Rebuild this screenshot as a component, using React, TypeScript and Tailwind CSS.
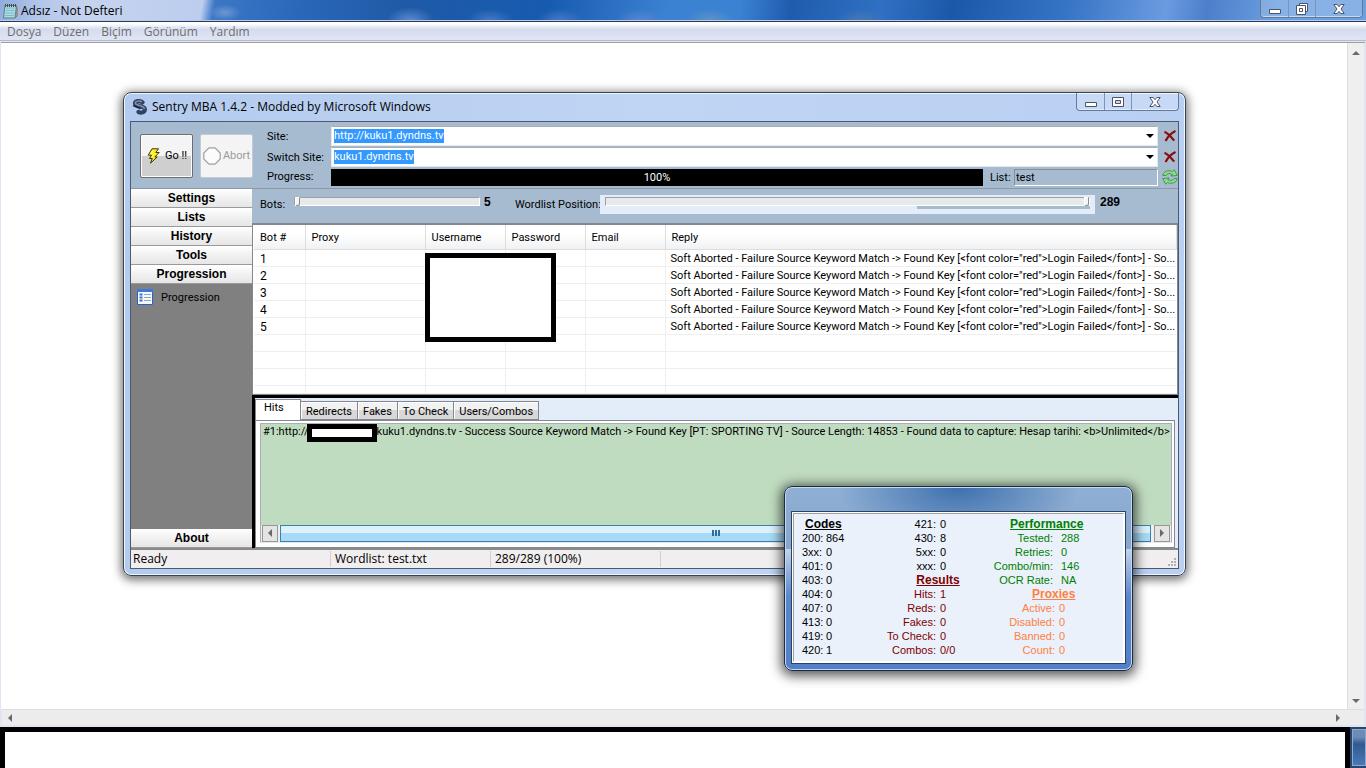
import type { ReactNode } from 'react';

const SIDE_MENU = ['Settings', 'Lists', 'History', 'Tools', 'Progression'];
const MENU_BAR = ['Dosya', 'Düzen', 'Biçim', 'Görünüm', 'Yardım'];
const COLUMNS = ['Bot #', 'Proxy', 'Username', 'Password', 'Email', 'Reply'];
const TABS = ['Redirects', 'Fakes', 'To Check', 'Users/Combos'];
const BOTS = [1, 2, 3, 4, 5];
const REPLY =
  'Soft Aborted - Failure Source Keyword Match -> Found Key [<font color="red">Login Failed</font>] - So...';

const CODES = [
  ['200:', '864'],
  ['3xx:', '0'],
  ['401:', '0'],
  ['403:', '0'],
  ['404:', '0'],
  ['407:', '0'],
  ['413:', '0'],
  ['419:', '0'],
  ['420:', '1'],
];
const MORE_CODES = [
  ['421:', '0'],
  ['430:', '8'],
  ['5xx:', '0'],
  ['xxx:', '0'],
];
const RESULTS = [
  ['Hits:', '1'],
  ['Reds:', '0'],
  ['Fakes:', '0'],
  ['To Check:', '0'],
  ['Combos:', '0/0'],
];
const PERFORMANCE = [
  ['Tested:', '288'],
  ['Retries:', '0'],
  ['Combo/min:', '146'],
  ['OCR Rate:', 'NA'],
];
const PROXIES = [
  ['Active:', '0'],
  ['Disabled:', '0'],
  ['Banned:', '0'],
  ['Count:', '0'],
];

/* ---------- icons ---------- */

const NotepadIcon = () => (
  <svg className="h-4 w-4 shrink-0" viewBox="0 0 16 16">
    <path d="M3 2.5h11.5L13 15H1.500z" fill="#a9dbe3" stroke="#5b7f8c" />
    <path d="M4 5h9M3.800 7.500h8.800M3.500 10h8.800M3.200 12.500h8.800" stroke="#7fbccb" />
    <path d="M3.500 1v3M5.500 1v3M7.500 1v3M9.500 1v3M11.500 1v3M13.500 1v3" stroke="#45494d" />
    <path d="M13 15l2-2V4" fill="none" stroke="#8b6a4a" />
  </svg>
);

const SentryIcon = () => (
  <svg className="h-4 w-4 shrink-0" viewBox="0 0 16 16" fill="none">
    <path
      d="M10.500 3.300C8 1.300 3 1.800 3 4.600c0 3.200 9.300 1.800 9.800 5.400.4 3.600-4 4.400-6.300 2.900"
      stroke="#33415e"
      strokeWidth="4.200"
      strokeLinecap="round"
    />
    <path
      d="M9.500 2.500C7 1.300 3.300 2.200 3.300 4.100c0 2.600 8.300 2.200 9 5.400"
      stroke="#8293b0"
      strokeWidth="1.500"
      strokeLinecap="round"
    />
    <path d="M1 6.500c2 1.500 5 1.500 7.500 3.300" stroke="#18223a" strokeWidth="1.500" />
  </svg>
);

const BoltIcon = () => (
  <svg className="h-4 w-4 shrink-0" viewBox="0 0 16 16">
    <path
      d="M6 .8h6.500L9.800 4.500h3.400L8.800 9h2.400L4.500 15.200l1.800-4.700H3.500l2-3.300H2.200z"
      fill="#ffee1e"
      stroke="#3a3608"
      strokeWidth="1"
    />
    <path d="M7 2.500L4.800 6M8.500 5L6 9" stroke="#fffbb0" />
  </svg>
);

const AbortIcon = () => (
  <svg className="h-[18px] w-[18px] shrink-0" viewBox="0 0 18 18">
    <path
      d="M6 .8h6L17.200 6v6L12 17.200H6L.8 12V6z"
      fill="#fbfbfb"
      stroke="#a0a0a0"
      strokeWidth="1.200"
    />
  </svg>
);

const DeleteIcon = () => (
  <svg className="h-3 w-3" viewBox="0 0 12 12" fill="none">
    <path d="M.5 1.800c3.200 1.300 6.500 5 9.700 8.800" stroke="#8a0c0c" strokeWidth="2.200" />
    <path d="M11.500 1C8 2.500 4 6.500 1.500 11" stroke="#8a0c0c" strokeWidth="2.200" />
  </svg>
);

const RefreshIcon = () => (
  <svg className="h-4 w-4" viewBox="0 0 16 16" stroke="#2f8b36" strokeWidth=".8" fill="#8fdc86">
    <path d="M.8 6.500C1.500 2.300 6 .6 10.500 2.500L12.300.8 15.300 6.500 9 7l1.300-1.600C7.500 4 5 4.400 4 6.500z" />
    <path d="M15.200 9.500c-.7 4.200-5.200 5.900-9.700 4l-1.800 1.700L.7 9.500 7 9l-1.300 1.600c2.800 1.400 5.300 1 6.300-1.100z" />
  </svg>
);

const ListIcon = () => (
  <svg className="h-4 w-4 shrink-0" viewBox="0 0 16 16">
    <path d="M.5.5h15v15H.5z" fill="#f4f8ff" stroke="#2d62c4" />
    <path d="M0 1.500h16" stroke="#3f78dc" strokeWidth="3" />
    <path d="M2.500 5.500h3M2.500 8.500h3M2.500 11.500h3" stroke="#3f6fc8" strokeWidth="2" />
    <path d="M7 5.500h7M7 8.500h7M7 11.500h7" stroke="#8ea6cc" />
  </svg>
);

const Arrow = ({ d }: { d: string }) => (
  <svg className="h-2 w-2" viewBox="0 0 8 8" fill="#6a6a6a">
    <path d={d} />
  </svg>
);

const UP = 'M0 6l4-4 4 4z';
const DOWN = 'M0 2l4 4 4-4z';
const LEFT = 'M6 0L2 4l4 4z';
const RIGHT = 'M2 0l4 4-4 4z';

const MinGlyph = () => (
  <svg className="h-3 w-3" viewBox="0 0 12 12">
    <path d="M.5 6.500h11v4H.5z" fill="#fff" stroke="#4b5468" />
  </svg>
);

const MaxGlyph = () => (
  <svg className="h-3 w-3" viewBox="0 0 12 12" fillRule="evenodd">
    <path d="M.5 1.500h11v9H.5zM3.500 4.500v3h5v-3z" fill="#fff" stroke="#4b5468" />
  </svg>
);

const RestoreGlyph = () => (
  <svg className="h-3 w-3" viewBox="0 0 12 12" fillRule="evenodd">
    <path d="M3.500.5h8v8h-8z" fill="#fff" stroke="#4b5468" />
    <path d="M.5 2.500h9v9h-9zM3.500 5.500v3h3v-3z" fill="#fff" stroke="#4b5468" />
  </svg>
);

const CloseGlyph = () => (
  <svg className="h-3 w-3" viewBox="0 0 12 12">
    <path
      d="M.8 1.500h3.400L6 3.700l1.800-2.200h3.400L8 6l3.200 4.500H7.800L6 8.300l-1.800 2.200H.8L4 6z"
      fill="#fff"
      stroke="#4b5468"
    />
  </svg>
);

/* ---------- small parts ---------- */

const WindowButtons = ({ restore }: { restore?: boolean }) => (
  <div className="flex h-[18px] shrink-0 divide-x divide-[#7f93b5] rounded-b border border-t-0 border-[#6478a0] bg-white/20 shadow-[inset_0_-1px_0_rgba(255,255,255,0.5)]">
    <button aria-label="Minimize" className="flex w-7 items-center justify-center">
      <MinGlyph />
    </button>
    <button aria-label="Maximize" className="flex w-[27px] items-center justify-center">
      {restore ? <RestoreGlyph /> : <MaxGlyph />}
    </button>
    <button aria-label="Close" className="flex w-[46px] items-center justify-center">
      <CloseGlyph />
    </button>
  </div>
);

const ComboRow = ({ id, label, value }: { id: string; label: string; value: string }) => (
  <div className="flex h-5 items-center">
    <label htmlFor={id} className="w-16 shrink-0 pt-0.5">
      {label}
    </label>
    <div className="flex h-full flex-1 items-center border border-[#e3e9ef] border-t-[#abadb3] bg-white pl-0.5">
      <input
        id={id}
        defaultValue={value}
        className="field-sizing-content h-[14px] bg-[#3399ff] text-white outline-none"
      />
      <button aria-label={`${label} history`} className="ml-auto px-[3px]">
        <svg className="h-2 w-2" viewBox="0 0 8 8">
          <path d="M0 2l4 4 4-4z" />
        </svg>
      </button>
    </div>
    <button aria-label={`Clear ${label}`} className="flex w-5 shrink-0 justify-end pr-0.5">
      <DeleteIcon />
    </button>
  </div>
);

const SideButton = ({ children }: { children: ReactNode }) => (
  <button className="h-[19px] w-full border-b border-[#9a9a9a] bg-linear-to-b from-white via-[#f1f1f1] via-50% to-[#e6e6e6] text-center font-['Liberation_Sans',Arial,sans-serif] text-[12px] leading-[18px] font-bold">
    {children}
  </button>
);

const SliderThumb =
  '[&::-webkit-slider-thumb]:h-[9px] [&::-webkit-slider-thumb]:w-[5px] [&::-webkit-slider-thumb]:appearance-none [&::-webkit-slider-thumb]:rounded-b-sm [&::-webkit-slider-thumb]:border [&::-webkit-slider-thumb]:border-t-white [&::-webkit-slider-thumb]:border-l-white [&::-webkit-slider-thumb]:border-[#8a8a8a] [&::-webkit-slider-thumb]:bg-[#f4f4f4]';

const StatRows = ({ rows, gap }: { rows: string[][]; gap: string }) => (
  <>
    {rows.map(([label, value]) => (
      <div key={label} className={`grid grid-cols-2 ${gap}`}>
        <dt className="flex justify-end whitespace-nowrap">{label}</dt>
        <dd>{value}</dd>
      </div>
    ))}
  </>
);

/* ---------- windows ---------- */

const Toolbar = () => (
  <div className="flex border-b border-[#8c9aa8] bg-[#a6bbd0] pt-1 pb-0.5">
    <div className="flex items-start gap-[7px] pt-2 pl-[9px]">
      <button className="flex h-11 w-[53px] items-center justify-center gap-[3px] rounded-xs border border-[#6f6f6f] bg-linear-to-b from-[#f4f4f4] from-50% to-[#cfcfcf] to-50% shadow-[inset_0_0_0_1px_#fbfbfb]">
        <BoltIcon />
        Go !!
      </button>
      <button
        disabled
        className="flex h-11 w-[53px] items-center justify-center gap-0.5 rounded-xs border border-[#c3cad1] bg-[#f4f4f4] text-[#9a9a9a]"
      >
        <AbortIcon />
        Abort
      </button>
    </div>
    <div className="flex flex-1 flex-col gap-px pl-[14px]">
      <ComboRow id="site" label="Site:" value="http://kuku1.dyndns.tv" />
      <ComboRow id="switch-site" label="Switch Site:" value="kuku1.dyndns.tv" />
      <div className="flex h-[18px] items-center">
        <span className="w-16 shrink-0 pt-px">Progress:</span>
        <div
          role="progressbar"
          aria-valuenow={100}
          className="h-[17px] flex-1 bg-black text-center leading-[17px] text-white"
        >
          100%
        </div>
        <label htmlFor="list" className="w-[31px] shrink-0 pt-0.5 pl-[7px]">
          List:
        </label>
        <input
          id="list"
          defaultValue="test"
          className="h-[17px] w-[144px] border border-t-[#8a8f95] border-r-white border-b-white border-l-[#8a8f95] bg-[#a6bbd0] px-px outline-none"
        />
        <button aria-label="Refresh list" className="flex w-5 shrink-0 justify-end">
          <RefreshIcon />
        </button>
      </div>
    </div>
  </div>
);

const Sidebar = () => (
  <nav className="flex w-[121px] shrink-0 flex-col bg-[#808080]">
    {SIDE_MENU.map((item) => (
      <SideButton key={item}>{item}</SideButton>
    ))}
    <button className="flex items-center gap-2 pt-1 pl-1.5">
      <ListIcon />
      <span className="pt-0.5">Progression</span>
    </button>
    <div className="mt-auto">
      <SideButton>About</SideButton>
    </div>
  </nav>
);

const Sliders = () => (
  <div className="flex h-[34px] items-start bg-[#a6bbd0] pt-1.5 pl-2">
    <label htmlFor="bots" className="w-[34px] pt-0.5">
      Bots:
    </label>
    <input
      id="bots"
      type="range"
      min={5}
      max={100}
      defaultValue={5}
      className={`mt-0.5 h-[9px] w-[186px] appearance-none border border-t-[#a0a0a0] border-r-white border-b-white border-l-[#a0a0a0] bg-[#e7eaea] ${SliderThumb}`}
    />
    <b className="w-[35px] pl-1 font-['Liberation_Sans',Arial,sans-serif] text-[12px] leading-[14px]">
      5
    </b>
    <label htmlFor="position" className="w-[85px] shrink-0 pt-0.5 whitespace-nowrap">
      Wordlist Position:
    </label>
    <div className="flex h-[19px] flex-1 flex-col items-stretch bg-[#e3edfa] px-[5px] pt-0.5">
      <input
        id="position"
        type="range"
        max={289}
        defaultValue={289}
        className={`h-[9px] w-full appearance-none border border-t-[#a0a0a0] border-r-white border-b-white border-l-[#a0a0a0] bg-[#e7eaea] ${SliderThumb}`}
      />
      <div className="h-[3px] w-[173px] self-end bg-[#a6bbd0]" />
    </div>
    <b className="w-[83px] pl-[5px] font-['Liberation_Sans',Arial,sans-serif] text-[12px] leading-[14px]">
      289
    </b>
  </div>
);

const BotTable = () => (
  <div className="relative border border-t-2 border-[#828790] border-t-[#828790] bg-white pl-px">
    <table className="w-full table-fixed border-collapse">
      <colgroup>
        <col className="w-[51px]" />
        <col className="w-[120px]" />
        <col className="w-20" />
        <col className="w-20" />
        <col className="w-20" />
        <col />
      </colgroup>
      <thead>
        <tr className="h-6 bg-linear-to-b from-white from-40% to-[#f0f1f3] to-100%">
          {COLUMNS.map((name) => (
            <th
              key={name}
              className="border-r border-b border-[#dcdddf] pt-0.5 pl-1.5 text-left font-normal"
            >
              {name}
            </th>
          ))}
        </tr>
      </thead>
      <tbody>
        {BOTS.map((bot) => (
          <tr key={bot} className="h-[17px]">
            <td className="border-r border-b border-[#efefef] pt-0.5 pl-1.5 text-[12px] leading-[14px]">
              {bot}
            </td>
            <td className="border-r border-b border-[#efefef]" />
            <td className="border-r border-b border-[#efefef]" />
            <td className="border-r border-b border-[#efefef]" />
            <td className="border-r border-b border-[#efefef]" />
            <td className="border-b border-[#efefef] pt-0.5 pl-[5px] leading-[14px] whitespace-nowrap">
              {REPLY}
            </td>
          </tr>
        ))}
        {['h-[17px]', 'h-[17px]', 'h-[17px]', 'h-2'].map((height, row) => (
          <tr key={row} className={height}>
            {COLUMNS.map((name) => (
              <td key={name} className="border-r border-b border-[#efefef] last:border-r-0" />
            ))}
          </tr>
        ))}
      </tbody>
    </table>
    {/* censored credentials */}
    <div className="absolute top-7 left-[172px] h-[89px] w-[131px] border-5 border-black bg-white" />
  </div>
);

const HitsPanel = () => (
  <div className="flex flex-1 flex-col border-t-3 border-l-3 border-black bg-[#e3edfa]">
    <div role="tablist" className="flex items-end pt-px">
      <button
        role="tab"
        aria-selected="true"
        className="h-[21px] w-[46px] border border-b-0 border-[#828790] bg-white pb-0.5 pl-2 text-left"
      >
        Hits
      </button>
      {TABS.map((tab) => (
        <button
          key={tab}
          role="tab"
          aria-selected="false"
          className="h-[19px] border border-l-0 border-[#828790] bg-linear-to-b from-[#f2f2f2] from-50% to-[#d8d8d8] to-50% px-[5px] pt-0.5 shadow-[inset_1px_1px_0_#fff]"
        >
          {tab}
        </button>
      ))}
    </div>
    <div className="mr-[3px] flex flex-1 flex-col border border-[#828790] bg-white p-1 pt-0.5 pr-0.5">
      <div className="flex h-[120px] flex-col border border-[#abadb3] border-b-[#e3e9ef]">
        <div className="flex flex-1 items-start bg-[#c0dcc0] pl-0.5 leading-4 whitespace-nowrap">
          #1:http://
          <span className="-ml-0.5 h-[18px] w-[70px] shrink-0 border-5 border-black bg-white" />
          kuku1.dyndns.tv - Success Source Keyword Match -&gt; Found Key [PT: SPORTING TV] - Source
          Length: 14853 - Found data to capture: Hesap tarihi: &lt;b&gt;Unlimited&lt;/b&gt;
        </div>
        <div className="flex h-[17px] gap-0.5 bg-[#efefef] px-px">
          <button
            aria-label="Scroll left"
            className="flex w-4 items-center justify-center border border-[#979797] bg-[#e4e4e4]"
          >
            <Arrow d={LEFT} />
          </button>
          <div className="flex flex-1 items-center justify-center gap-px border border-[#3c7fb1] bg-linear-to-b from-[#dcf1fc] from-50% to-[#a6dbf6] to-50%">
            <i className="h-1.5 w-0.5 bg-[#2f6d9c]" />
            <i className="h-1.5 w-0.5 bg-[#2f6d9c]" />
            <i className="h-1.5 w-0.5 bg-[#2f6d9c]" />
          </div>
          <button
            aria-label="Scroll right"
            className="ml-px flex w-4 items-center justify-center border border-[#979797] bg-[#e4e4e4]"
          >
            <Arrow d={RIGHT} />
          </button>
        </div>
      </div>
    </div>
  </div>
);

const MainWindow = () => (
  <section className="absolute top-[92px] right-[180px] left-[123px] flex flex-col rounded-lg border border-[#3b4350] bg-linear-to-r from-[#b3cbee] via-[#c0d5f4] to-[#b9d0f3] px-1.5 pb-1.5 font-[Roboto,'Liberation_Sans',sans-serif] text-[11px] text-black shadow-[inset_0_0_0_1px_#eef5ff,0_2px_10px_2px_rgba(0,0,0,0.55)]">
    <header className="flex h-7 items-start pl-0.5">
      <div className="flex flex-1 items-center gap-1 pt-1.5">
        <SentryIcon />
        <h1 className="font-['Open_Sans','Noto_Sans',sans-serif] text-[12px] leading-4">
          Sentry MBA 1.4.2 - Modded by Microsoft Windows
        </h1>
      </div>
      <WindowButtons />
    </header>
    <div className="flex flex-col border border-[#4b5a70] border-t-[#4b5a70] bg-[#f0eeee]">
      <Toolbar />
      <div className="flex">
        <Sidebar />
        <div className="flex min-w-0 flex-1 flex-col">
          <Sliders />
          <BotTable />
          <HitsPanel />
        </div>
      </div>
      <footer className="flex h-5 items-center border-t-2 border-[#8a8a8a] font-['Open_Sans','Noto_Sans',sans-serif] text-[12px] leading-4">
        <span className="w-[200px] border-r border-[#d0d0d0] pl-0.5">Ready</span>
        <span className="w-40 border-r border-[#d0d0d0] pl-1">Wordlist: test.txt</span>
        <span className="w-[170px] border-r border-[#d0d0d0] pl-1">289/289 (100%)</span>
        <svg className="mt-auto ml-auto h-3 w-3" viewBox="0 0 12 12" fill="#b4b0b0">
          <path d="M8 2h2v2H8zM8 5h2v2H8zM8 8h2v2H8zM5 5h2v2H5zM5 8h2v2H5zM2 8h2v2H2z" />
        </svg>
      </footer>
    </div>
  </section>
);

const StatsWindow = () => (
  <section className="absolute top-[486px] left-[784px] w-[349px] rounded-lg border border-[#1d2b40] bg-[radial-gradient(ellipse_120px_60px_at_50%_0%,#3d70ae,transparent),linear-gradient(#8fafd3,#86a6cf_34%,#c3d3ea_34%,#5a86cc_60%,#5280c8)] px-1.5 pt-6 pb-1.5 font-['Liberation_Sans',Arial,sans-serif] text-[11px] leading-[14px] text-black shadow-[inset_0_0_0_1px_#c4d8ef,0_2px_12px_3px_rgba(0,0,0,0.65)]">
    <div className="border border-[#2c4262] bg-white p-px">
      <div className="flex border border-[#a0a0a0] border-r-white border-b-white bg-[#eaf1fb] pt-[3px] pb-1 pl-2">
        <div className="w-[68px]">
          <h2 className="pl-[3px] text-[12px] font-bold underline">Codes</h2>
          <dl>
            {CODES.map(([label, value]) => (
              <div key={label} className="flex">
                <dt className="w-6">{label}</dt>
                <dd>{value}</dd>
              </div>
            ))}
          </dl>
        </div>
        <div className="w-[136px]">
          <dl>
            <StatRows rows={MORE_CODES} gap="gap-1" />
          </dl>
          <h2 className="text-center text-[12px] font-bold text-[#800000] underline">Results</h2>
          <dl className="text-[#800000]">
            <StatRows rows={RESULTS} gap="gap-1" />
          </dl>
        </div>
        <div className="w-[102px]">
          <h2 className="pl-1 text-[12px] font-bold text-[#008000] underline">Performance</h2>
          <dl className="text-[#008000]">
            <StatRows rows={PERFORMANCE} gap="gap-2" />
          </dl>
          <h2 className="pl-[26px] text-[12px] font-bold text-[#ff8040] underline">Proxies</h2>
          <dl className="text-[#ff8040]">
            <StatRows rows={PROXIES} gap="gap-1" />
          </dl>
        </div>
      </div>
    </div>
  </section>
);

const Notepad = () => (
  <div className="flex flex-1 flex-col bg-[#e0e4f3] font-['Open_Sans','Noto_Sans',sans-serif] text-[12px] text-black">
    <header className="flex h-[22px] items-start border-b border-[#27395c] bg-[radial-gradient(ellipse_24px_14px_at_410px_100%,#5f8bd0,transparent),radial-gradient(ellipse_24px_12px_at_490px_100%,#4a78c4,transparent),radial-gradient(ellipse_24px_12px_at_560px_100%,#4a78c8,transparent),radial-gradient(ellipse_24px_12px_at_640px_100%,#5a85d0,transparent),radial-gradient(ellipse_24px_12px_at_710px_100%,#5f93c4,transparent),radial-gradient(ellipse_24px_12px_at_860px_100%,#4a78b4,transparent),radial-gradient(ellipse_16px_8px_at_225px_60%,#6f96d2,transparent),linear-gradient(100deg,#8fadde_0,#b4c6e8_40px,#c5d3ee_90px,#bccdee_200px,#3c77c6_212px,#2a67b8_300px,#1f5aa6_400px,#175bb0_540px,#3c82d2_660px,#3c82d2_730px,#1f5cae_780px,#3070c2_870px,#1c58a8_940px,#3573c4_1050px,#6a9be0_1150px,#4c7fca_1190px,#6b9fdf_1260px)] shadow-[inset_0_-1px_0_#b9cdea]">
      <div className="flex flex-1 items-center gap-[3px] pt-[3px] pl-0.5">
        <NotepadIcon />
        <span className="leading-4">Adsız - Not Defteri</span>
      </div>
      <div className="pr-[3px]">
        <WindowButtons restore />
      </div>
    </header>
    <nav className="flex h-[19px] items-center gap-3 border-b border-[#b4bccc] bg-linear-to-b from-white from-10% via-[#d5dcee] via-40% to-[#e0e5f5] pt-px pl-[7px] text-[#6d6d6d]">
      {MENU_BAR.map((item) => (
        <button key={item}>{item}</button>
      ))}
    </nav>
    <div className="mx-px mt-px flex flex-1 border-t border-[#a0a0a0]">
      <textarea aria-label="Metin" className="flex-1 resize-none bg-white outline-none" />
      <div className="mr-px flex w-[17px] flex-col items-center justify-between border-l border-[#dedede] bg-[#efefef] pt-1.5 pb-1">
        <Arrow d={UP} />
        <Arrow d={DOWN} />
      </div>
    </div>
    <div className="mr-0.5 mb-0.5 ml-0.5 flex h-4 items-center justify-between border-t border-[#dedede] bg-[#ececec] pr-[22px] pl-1">
      <Arrow d={LEFT} />
      <Arrow d={RIGHT} />
    </div>
  </div>
);

export default function App() {
  return (
    <main className="relative flex h-screen flex-col overflow-hidden bg-white">
      <Notepad />
      <div className="flex h-[41px]">
        <div className="flex-1 border-5 border-b-0 border-black bg-white" />
        <div className="w-4 bg-[#27466f] pt-0.5 pl-0.5">
          <button
            aria-label="Show desktop"
            className="block h-[37px] w-full border border-[#8fa9cb] bg-linear-to-b from-[#6d8cb4] from-20% via-[#2f5a92] via-40% to-[#4a78b8]"
          />
        </div>
      </div>
      <MainWindow />
      <StatsWindow />
    </main>
  );
}
